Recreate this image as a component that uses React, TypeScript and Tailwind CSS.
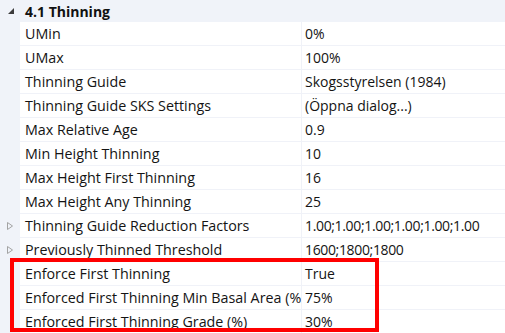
import React from 'react';

type Row = { name: string; value: string; expandable?: boolean; numeric?: boolean };

const ROWS: Row[] = [
  { name: 'UMin', value: '0%' },
  { name: 'UMax', value: '100%' },
  { name: 'Thinning Guide', value: 'Skogsstyrelsen (1984)' },
  { name: 'Thinning Guide SKS Settings', value: '(Öppna dialog...)' },
  { name: 'Max Relative Age', value: '0.9' },
  { name: 'Min Height Thinning', value: '10' },
  { name: 'Max Height First Thinning', value: '16' },
  { name: 'Max Height Any Thinning', value: '25' },
  { name: 'Thinning Guide Reduction Factors', value: '1.00;1.00;1.00;1.00;1.00;1.00', expandable: true, numeric: true },
  { name: 'Previously Thinned Threshold', value: '1600;1800;1800', expandable: true, numeric: true },
  { name: 'Enforce First Thinning', value: 'True' },
  { name: 'Enforced First Thinning Min Basal Area (%)', value: '75%' },
  { name: 'Enforced First Thinning Grade (%)', value: '30%' },
];

const ExpandArrow = () => (
  <svg width="8" height="10" viewBox="0 0 8 10">
    <path d="M1.5 1.5 L6.5 5 L1.5 8.5 Z" fill="none" stroke="#a3a3a3" strokeWidth="1" />
  </svg>
);

const CollapseArrow = () => (
  <svg width="8" height="8" viewBox="0 0 8 8">
    <path d="M7 1 L7 7 L1 7 Z" fill="#3c3c3c" />
  </svg>
);

export default function App() {
  return (
    <div
      className="relative w-[505px] h-[333px] overflow-hidden bg-white text-[14px] text-[#141414]"
      style={{ fontFamily: '"Open Sans", "Noto Sans", sans-serif' }}
    >
      {/* Category header */}
      <div className="flex h-[22px] items-center bg-[#f0f3f9]">
        <div className="w-[20px] flex items-center justify-center pl-[2px]">
          <CollapseArrow />
        </div>
        <span className="pl-[5px] font-bold text-[#111]">4.1 Thinning</span>
      </div>

      {/* Property rows */}
      {ROWS.map((r) => (
        <div key={r.name} className="flex h-[24px]">
          <div className="w-[20px] shrink-0 bg-[#f0f3f9] flex items-center justify-center">
            {r.expandable && <ExpandArrow />}
          </div>
          <div className="w-[282px] shrink-0 flex items-center pl-[5px] overflow-hidden whitespace-nowrap border-b border-r border-[#f0f2f8] text-[14.3px]">
            {r.name}
          </div>
          <div
            className={`flex-1 flex items-center pl-[3px] whitespace-nowrap border-b border-[#f0f2f8] ${r.numeric ? 'tracking-[-0.35px]' : ''}`}
          >
            {r.value}
          </div>
        </div>
      ))}

      {/* Highlight annotation */}
      <div className="absolute left-[10px] top-[258px] w-[369px] h-[74px] border-[4px] border-[#ff0000] pointer-events-none" />
    </div>
  );
}
